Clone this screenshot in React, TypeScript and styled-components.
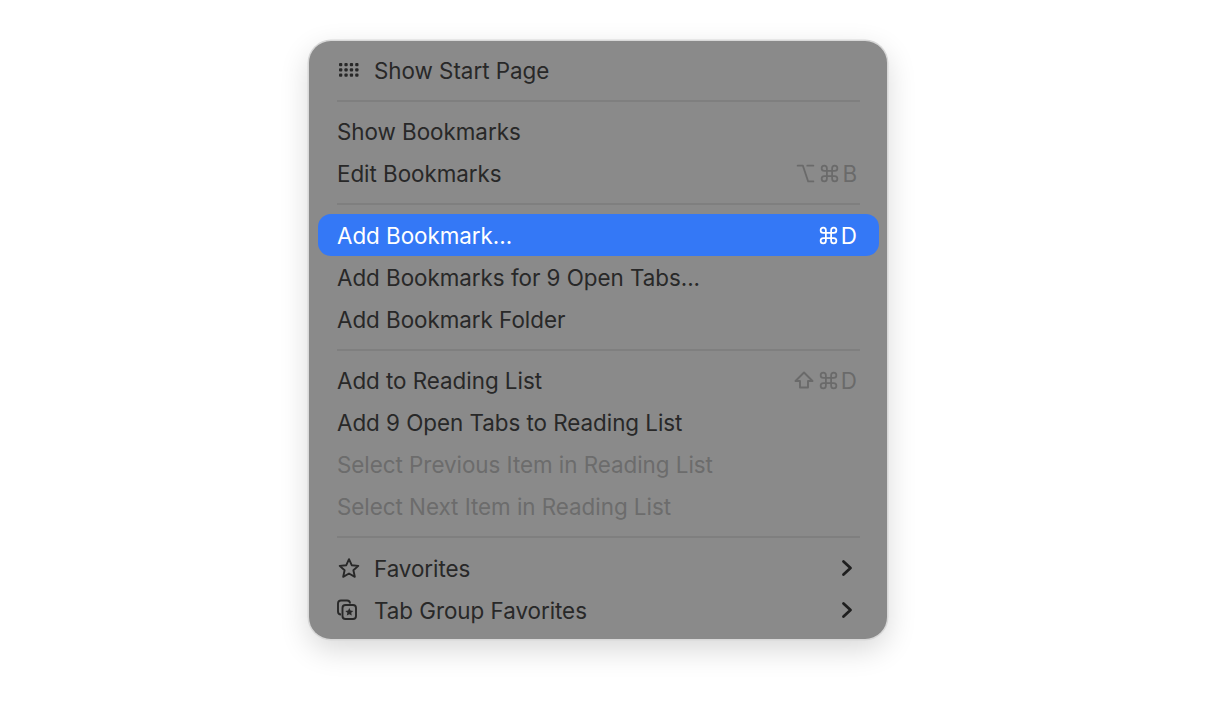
import { FunctionComponent, ReactNode } from "react";
import styled, { createGlobalStyle } from "styled-components";
import { Command, Option } from "lucide-react";

const GlobalStyle = createGlobalStyle`
  html, body {
    margin: 0;
    padding: 0;
    background: #fff;
    overflow: hidden;
  }
`;

const Page = styled.div`
  width: 1216px;
  height: 702px;
  padding: 41px 0 0 309px;
  box-sizing: border-box;
`;

const Menu = styled.div`
  width: 578px;
  height: 598px;
  box-sizing: border-box;
  padding: 8px 8px 8px 9px;
  background: #8a8a8a;
  border-radius: 22px;
  box-shadow: 0 0 0 1.5px #d8d8d8, 0 10px 30px rgba(0, 0, 0, 0.16);
  font-family: Inter, "Noto Sans", sans-serif;
`;

const Row = styled.div<{ $active?: boolean; $disabled?: boolean }>`
  height: 42px;
  display: flex;
  align-items: center;
  padding: 0 22px 0 19px;
  border-radius: 13px;
  font-size: 22.4px;
  letter-spacing: -0.03px;
  background: ${({ $active }) => ($active ? "#3478f6" : "transparent")};
  color: ${({ $active, $disabled }) =>
    $active ? "#fff" : $disabled ? "#6c6c6c" : "#282828"};
`;

const Label = styled.span`
  flex: 1;
  white-space: nowrap;
`;

const IconSlot = styled.span`
  width: 37px;
  height: 24px;
  flex: none;
  display: flex;
  align-items: center;
`;

const Shortcut = styled.span<{ $active?: boolean }>`
  display: flex;
  align-items: center;
  color: ${({ $active }) => ($active ? "#fff" : "#6a6a6a")};
`;

const CommandKey = styled(Command)`
  margin: 0 2px 0 3px;
`;

const ShiftGlyph = styled.svg`
  width: 20px;
  height: 18px;
  margin-right: 1px;
`;

const Chevron = styled.svg`
  width: 12px;
  height: 20px;
  margin-right: 4px;
`;

const Separator = styled.div<{ $space: number }>`
  height: ${({ $space }) => $space}px;
  display: flex;
  align-items: center;
  padding: 0 19px;
  &::after {
    content: "";
    flex: 1;
    height: 2px;
    background: #7f7f7f;
  }
`;

const GridIcon: FunctionComponent = () => (
  <svg width="24" height="16" viewBox="0 0 24 16" fill="#282828">
    {[0, 1, 2].map((r) =>
      [0, 1, 2, 3].map((c) => (
        <rect key={`${r}-${c}`} x={2 + c * 5.4} y={1 + r * 5.2} width="3.3" height="3.3" rx="1" />
      ))
    )}
  </svg>
);

const StarIcon: FunctionComponent = () => (
  <svg width="24" height="22" viewBox="0 0 24 22" fill="none" stroke="#282828" strokeWidth="1.9" strokeLinejoin="round">
    <path d="M12 2.200l2.700 6 6.600.7-4.900 4.400 1.400 6.500L12 16.500l-5.800 3.300 1.400-6.500-4.900-4.400 6.600-.7z" />
  </svg>
);

const TabGroupIcon: FunctionComponent = () => (
  <svg width="24" height="22" viewBox="1 0 24 22" fill="none" stroke="#282828" strokeWidth="1.9" strokeLinejoin="round">
    <path d="M5 15.500c-2 0-3-1-3-3V4.500c0-2 1-3 3-3h6c2 0 3 1 3 3" />
    <rect x="6.500" y="6" width="13.500" height="14" rx="3" />
    <path
      d="M13.300 9l1.200 2.600 2.800.3-2.100 1.900.6 2.800-2.500-1.400-2.500 1.400.6-2.800-2.100-1.900 2.800-.3z"
      fill="#282828"
      stroke="none"
    />
  </svg>
);

const ChevronRight: FunctionComponent = () => (
  <Chevron viewBox="0 0 12 20" fill="none" stroke="#1f1f1f" strokeWidth="2.800" strokeLinecap="round" strokeLinejoin="round">
    <path d="M2.500 3.500L9.500 10l-7 6.500" />
  </Chevron>
);

const ShiftIcon: FunctionComponent = () => (
  <ShiftGlyph viewBox="0 0 20 18" fill="none" stroke="currentColor" strokeWidth="1.9" strokeLinejoin="round">
    <path d="M10 1.500L18.500 10H14v6.500H6V10H1.500z" />
  </ShiftGlyph>
);

const Item: FunctionComponent<{
  icon?: ReactNode;
  label: string;
  keys?: ReactNode;
  active?: boolean;
  disabled?: boolean;
  submenu?: boolean;
}> = ({ icon, label, keys, active, disabled, submenu }) => (
  <Row $active={active} $disabled={disabled}>
    {icon && <IconSlot>{icon}</IconSlot>}
    <Label>{label}</Label>
    {keys && <Shortcut $active={active}>{keys}</Shortcut>}
    {submenu && <ChevronRight />}
  </Row>
);

const App: FunctionComponent = () => {
  return (
    <Page>
      <GlobalStyle />
      <Menu>
        <Item icon={<GridIcon />} label="Show Start Page" />
        <Separator $space={19} />
        <Item label="Show Bookmarks" />
        <Item
          label="Edit Bookmarks"
          keys={
            <>
              <Option size={21} strokeWidth={2} />
              <CommandKey size={21} strokeWidth={2} />B
            </>
          }
        />
        <Separator $space={20} />
        <Item
          label="Add Bookmark..."
          active
          keys={
            <>
              <CommandKey size={21} strokeWidth={2} />D
            </>
          }
        />
        <Item label="Add Bookmarks for 9 Open Tabs..." />
        <Item label="Add Bookmark Folder" />
        <Separator $space={19} />
        <Item
          label="Add to Reading List"
          keys={
            <>
              <ShiftIcon />
              <CommandKey size={21} strokeWidth={2} />D
            </>
          }
        />
        <Item label="Add 9 Open Tabs to Reading List" />
        <Item label="Select Previous Item in Reading List" disabled />
        <Item label="Select Next Item in Reading List" disabled />
        <Separator $space={20} />
        <Item icon={<StarIcon />} label="Favorites" submenu />
        <Item icon={<TabGroupIcon />} label="Tab Group Favorites" submenu />
      </Menu>
    </Page>
  );
};

export default App;
